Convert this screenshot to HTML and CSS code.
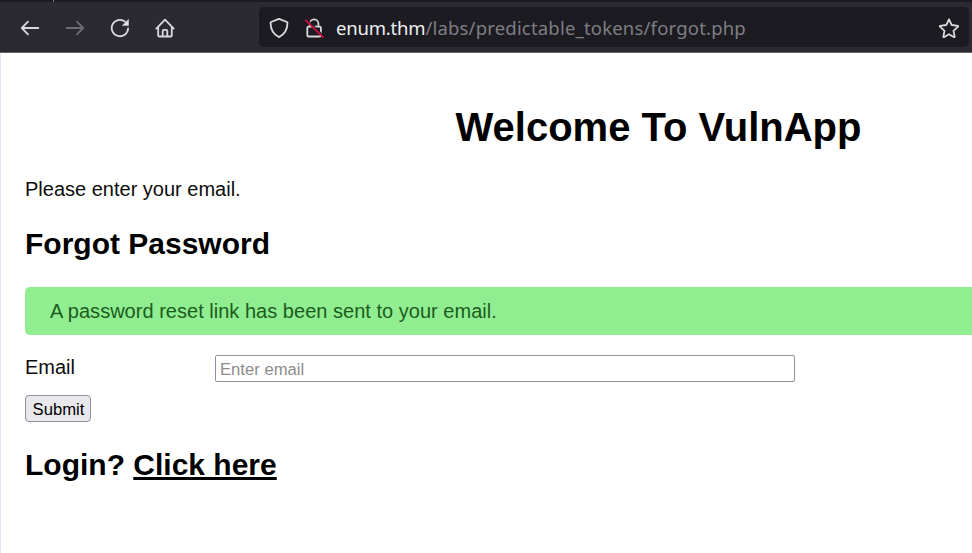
FILE: index.html
```html
<!DOCTYPE html>
<html lang="en">
<head>
<meta charset="utf-8">
<title>VulnApp</title>
<link rel="stylesheet" href="styles.css">
</head>
<body>
<header class="browser">
  <div class="tabstrip"><span class="tab-divider"></span></div>
  <div class="toolbar">
    <nav class="nav">
      <svg class="icon" viewBox="0 0 20 20"><path d="M18.300 10H2M8 3.700 1.800 10 8 16.300"/></svg>
      <svg class="icon dim" viewBox="0 0 20 20"><path d="M1.700 10H18M12 3.700 18.200 10 12 16.300"/></svg>
      <svg class="icon" viewBox="0 0 20 20"><path d="M18.100 10.500A8.200 8.200 0 1 1 15 3.600"/><path class="fill" d="M18.500 1.600V7.600H12.500Z"/></svg>
      <svg class="icon" viewBox="0 0 20 20"><path d="M1.300 10.600 10 1.700l8.700 8.900M3.200 9v8.200q0 1.300 1.300 1.300h11q1.300 0 1.300-1.300V9M7.700 18.300v-5.200q0-1.200 1.200-1.200h2.200q1.200 0 1.200 1.200v5.200"/></svg>
    </nav>
    <div class="urlbar">
      <svg class="icon" viewBox="0 0 20 20"><path d="M10 .9 18 4q.5.2.5.8C18.400 11.500 15.500 16.500 10 19.100 4.500 16.500 1.600 11.500 1.500 4.800q0-.6.5-.8Z"/></svg>
      <svg class="icon lock" viewBox="0 0 20 20"><path d="M5.800 8.500V5.600a4.300 4.300 0 0 1 8.600 0v2.900M4.600 8.600h11q1.300 0 1.300 1.300v7.300q0 1.300-1.300 1.300h-11q-1.300 0-1.300-1.300V9.900q0-1.300 1.300-1.300Z"/><path class="gap" d="M3.200 1.800 20 18.300"/><path class="slash" d="M1.800 2.300 19 19.200"/></svg>
      <div class="url"><span class="host">enum.thm</span><span class="path">/labs/predictable_tokens/forgot.php</span></div>
      <svg class="icon star" viewBox="0 0 20 20"><path d="m10 1.300 2.700 5.700 6.200.8q.5.300.1.800l-4.500 4.200 1.200 6.100q-.1.500-.6.300L10 16.300l-5.100 2.900q-.5.200-.6-.3l1.200-6.100L1 8.600q-.4-.5.1-.8L7.300 7Z"/></svg>
    </div>
  </div>
</header>
<main class="page">
  <div class="content">
    <h1 class="title">Welcome To VulnApp</h1>
    <p class="intro">Please enter your email.</p>
    <h2 class="heading">Forgot Password</h2>
    <div class="alert">A password reset link has been sent to your email.</div>
    <form class="form">
      <div class="row">
        <label class="label" for="email">Email</label>
        <input class="input" id="email" type="text" placeholder="Enter email">
      </div>
      <button class="submit" type="button">Submit</button>
    </form>
    <h2 class="login">Login? <a class="link" href="#">Click here</a></h2>
  </div>
</main>
</body>
</html>
```
FILE: styles.css
```css
* { box-sizing: border-box; }
body {
  margin: 0;
  height: 553px;
  overflow: hidden;
  display: flex;
  flex-direction: column;
  background: #fff;
  color: #0c0c0c;
  font: 20px/24px "Liberation Sans", Arial, sans-serif;
}
.browser { flex: none; height: 53px; background: #2b2a33; border-bottom: 1px solid #64636b; }
.tabstrip { height: 2px; background: #1c1b22; }
.tab-divider { display: block; width: 1px; height: 2px; margin-left: 53px; background: #77767d; }
.toolbar { display: flex; height: 50px; padding: 5px 3px 5px 20px; }
.nav { display: flex; align-items: center; gap: 25px; width: 239px; padding-top: 1px; }
.icon {
  flex: none;
  width: 20px;
  height: 20px;
  fill: none;
  stroke: #d9d9dd;
  stroke-width: 1.8;
  stroke-linecap: round;
  stroke-linejoin: round;
}
.icon.dim { stroke: #6d6c73; }
.fill { fill: #e4e4e8; stroke-width: .5; }
.gap { stroke: #1c1b22; stroke-width: 1.4; }
.slash { stroke: #d70b43; stroke-width: 1.8; }
.urlbar {
  flex: 1;
  display: flex;
  align-items: center;
  height: 40px;
  padding: 1px 10px 0 10px;
  border-radius: 5px;
  background: #1c1b22;
}
.lock { margin-left: 15px; }
.url {
  margin-left: 12px;
  font: 18.5px/24px "Noto Sans", sans-serif;
  white-space: nowrap;
}
.host { color: #f0f0f3; letter-spacing: -.2px; }
.path { color: #7f7e84; letter-spacing: .19px; }
.star { margin-left: auto; }
.page { flex: 1; overflow: hidden; padding: 51px 0 0 24px; border-left: 1px solid #ece1f0; }
.content { width: 1267px; }
h1, h2, p { margin: 0; }
.title { font-size: 40px; line-height: 46px; text-align: center; }
.title, .heading, .login { color: #000; }
.intro { margin-top: 27px; }
.heading, .login { font-size: 30px; line-height: 34px; }
.heading { margin-top: 26px; }
.alert {
  margin-top: 25.500px;
  height: 48.500px;
  padding: 12px 25px;
  border-radius: 5px;
  background: #90ee90;
  color: #1e5b1e;
  letter-spacing: .02px;
}
.row { display: flex; margin-top: 20px; }
.label { width: 190px; }
.input {
  width: 580px;
  height: 27px;
  padding: 3px 4px 1px;
  border: 1px solid #8f8f9d;
  border-radius: 2px;
  background: #fff;
  font: 16.67px/20px "Liberation Sans", Arial, sans-serif;
}
.input::placeholder { color: #8c8c8c; }
.submit {
  display: block;
  width: 66px;
  height: 27px;
  margin-top: 13px;
  padding: 2px 0 0 1px;
  border: 1px solid #8f8f9d;
  border-radius: 4px;
  background: #e9e9ed;
  color: #000;
  font: 16.67px/20px "Liberation Sans", Arial, sans-serif;
}
.login { margin-top: 26px; }
.link { color: inherit; text-decoration: underline; text-decoration-thickness: 3px; }
```
